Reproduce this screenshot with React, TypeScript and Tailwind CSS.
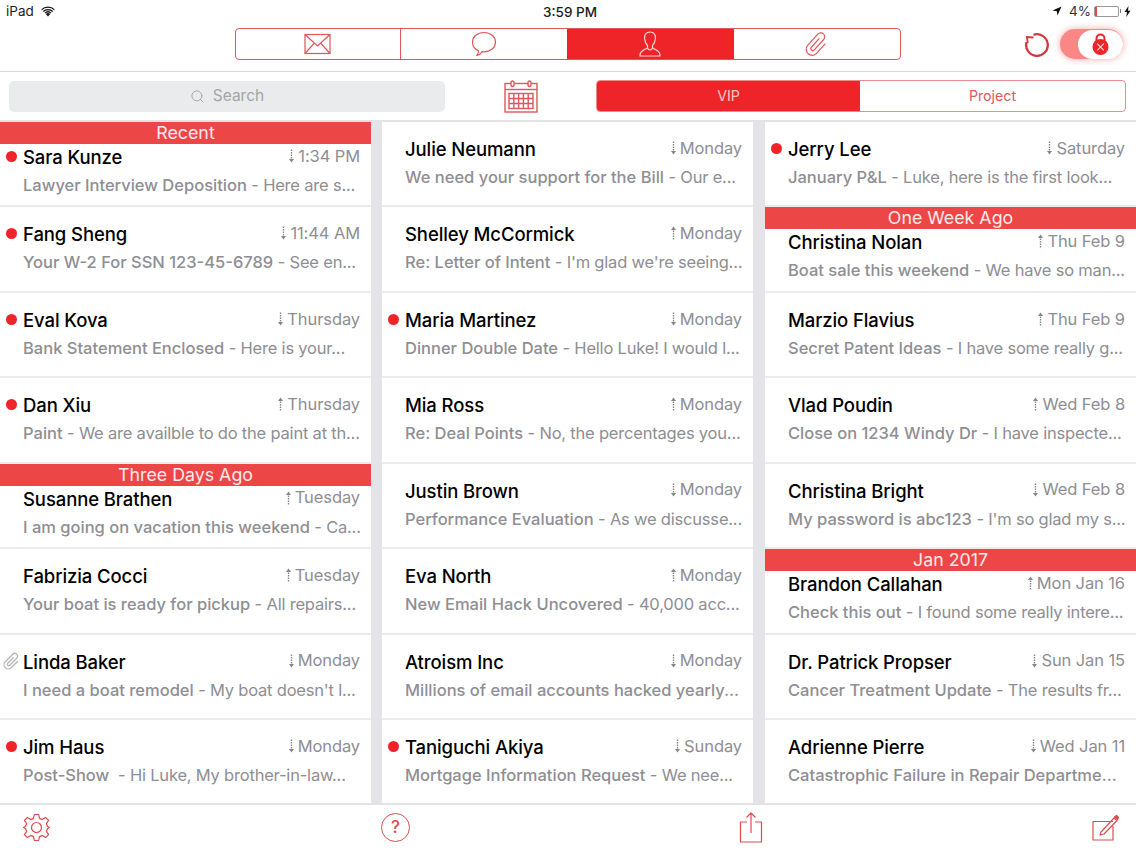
import { Search } from "lucide-react"

const FONT = "font-['Inter','Liberation_Sans',sans-serif]"

type Mail = {
  name: string
  subject: string
  preview: string
  date: string
  up?: boolean
  dot?: boolean
  clip?: boolean
  section?: string
}

const col1: Mail[] = [
  { section: "Recent", name: "Sara Kunze", subject: "Lawyer Interview Deposition", preview: "Here are s...", date: "1:34 PM", dot: true },
  { name: "Fang Sheng", subject: "Your W-2 For SSN 123-45-6789", preview: "See en...", date: "11:44 AM", dot: true },
  { name: "Eval Kova", subject: "Bank Statement Enclosed", preview: "Here is your...", date: "Thursday", dot: true },
  { name: "Dan Xiu", subject: "Paint", preview: "We are availble to do the paint at th...", date: "Thursday", up: true, dot: true },
  { section: "Three Days Ago", name: "Susanne Brathen", subject: "I am going on vacation this weekend", preview: "Ca...", date: "Tuesday", up: true },
  { name: "Fabrizia Cocci", subject: "Your boat is ready for pickup", preview: "All repairs...", date: "Tuesday", up: true },
  { name: "Linda Baker", subject: "I need a boat remodel", preview: "My boat doesn't l...", date: "Monday", clip: true },
  { name: "Jim Haus", subject: "Post-Show ", preview: "Hi Luke, My brother-in-law...", date: "Monday", dot: true },
]

const col2: Mail[] = [
  { name: "Julie Neumann", subject: "We need your support for the Bill", preview: "Our e...", date: "Monday" },
  { name: "Shelley McCormick", subject: "Re: Letter of Intent", preview: "I'm glad we're seeing...", date: "Monday", up: true },
  { name: "Maria Martinez", subject: "Dinner Double Date", preview: "Hello Luke! I would l...", date: "Monday", dot: true },
  { name: "Mia Ross", subject: "Re: Deal Points", preview: "No, the percentages you...", date: "Monday", up: true },
  { name: "Justin Brown", subject: "Performance Evaluation", preview: "As we discusse...", date: "Monday" },
  { name: "Eva North", subject: "New Email Hack Uncovered", preview: "40,000 acc...", date: "Monday", up: true },
  { name: "Atroism Inc", subject: "Millions of email accounts hacked yearly...", preview: "", date: "Monday" },
  { name: "Taniguchi Akiya", subject: "Mortgage Information Request", preview: "We nee...", date: "Sunday", dot: true },
]

const col3: Mail[] = [
  { name: "Jerry Lee", subject: "January P&L", preview: "Luke, here is the first look...", date: "Saturday", dot: true },
  { section: "One Week Ago", name: "Christina Nolan", subject: "Boat sale this weekend", preview: "We have so man...", date: "Thu Feb 9", up: true },
  { name: "Marzio Flavius", subject: "Secret Patent Ideas", preview: "I have some really g...", date: "Thu Feb 9", up: true },
  { name: "Vlad Poudin", subject: "Close on 1234 Windy Dr", preview: "I have inspecte...", date: "Wed Feb 8", up: true },
  { name: "Christina Bright", subject: "My password is abc123", preview: "I'm so glad my s...", date: "Wed Feb 8" },
  { section: "Jan 2017", name: "Brandon Callahan", subject: "Check this out", preview: "I found some really intere...", date: "Mon Jan 16", up: true },
  { name: "Dr. Patrick Propser", subject: "Cancer Treatment Update", preview: "The results fr...", date: "Sun Jan 15" },
  { name: "Adrienne Pierre", subject: "Catastrophic Failure in Repair Departme...", preview: "", date: "Wed Jan 11" },
]

const CLIP_PATH = "M10 7 V19 a2 2 0 0 0 4 0 V5 a4 4 0 0 0 -8 0 V20 a6 6 0 0 0 12 0 V7"

function PriorityArrow({ up }: { up?: boolean }) {
  return (
    <svg width="7" height="14" viewBox="0 0 7 14" className={up ? "rotate-180" : ""} fill="#85858a">
      <rect x="2.8" y="0.5" width="1.4" height="1.5" />
      <rect x="2.8" y="3" width="1.4" height="1.5" />
      <rect x="2.8" y="5.5" width="1.4" height="1.5" />
      <rect x="2.8" y="8" width="1.4" height="1.5" />
      <path d="M1 10 H6 L3.5 13.5 Z" />
    </svg>
  )
}

function MailRow({ mail }: { mail: Mail }) {
  return (
    <div className="h-[85.45px] shrink-0 flex flex-col bg-white border-b-2 border-[#ebebed]">
      {mail.section && (
        <div className="h-[22px] shrink-0 bg-[#ec4646] text-[#fdeaea] text-[17.8px] leading-[22px] text-center">
          {mail.section}
        </div>
      )}
      <div className={`flex-1 pl-[23px] pr-[11px] ${mail.section ? "pt-0" : "pt-[14px]"}`}>
        <div className="flex items-center justify-between h-[26px]">
          <div className="relative text-[18.5px] font-medium text-black leading-[26px] tracking-[-0.1px]">
            {mail.dot && <span className="absolute left-[-17px] top-[7px] w-[11px] h-[11px] rounded-full bg-[#ee2429]" />}
            {mail.clip && (
              <svg width="19" height="19" viewBox="0 0 24 27" fill="none" stroke="#b5b5b8" strokeWidth="1.8" className="absolute left-[-21px] top-[3px] rotate-45">
                <path d={CLIP_PATH} />
              </svg>
            )}
            {mail.name}
          </div>
          <div className="flex items-center gap-[3px] mt-[-2px] text-[16.5px] text-[#8e8e93] tracking-[-0.1px]">
            <PriorityArrow up={mail.up} />
            {mail.date}
          </div>
        </div>
        <div className="mt-[2px] mr-[-10px] text-[16.5px] leading-[27px] text-[#8e8e93] whitespace-nowrap">
          <span className="font-medium">{mail.subject}</span>
          {mail.preview && <span className="whitespace-pre tracking-[-0.2px]"> - {mail.preview}</span>}
        </div>
      </div>
    </div>
  )
}

function MailColumn({ mails }: { mails: Mail[] }) {
  return (
    <div className="w-[371px] flex flex-col min-h-0 overflow-hidden">
      {mails.map((m) => (
        <MailRow key={m.name} mail={m} />
      ))}
    </div>
  )
}

function TabIcon({ kind, color }: { kind: string; color: string }) {
  const p = { fill: "none", stroke: color, strokeWidth: 1.2 }
  if (kind === "mail") {
    return (
      <svg width="28" height="22" viewBox="0 0 28 22" {...p}>
        <rect x="1" y="1.5" width="25" height="19" />
        <path d="M1 1.5 L13.5 13 L26 1.5 M1 20.5 L10 10.5 M26 20.5 L17 10.5" />
      </svg>
    )
  }
  if (kind === "chat") {
    return (
      <svg width="26" height="26" viewBox="0 0 26 26" {...p}>
        <path d="M13 1.5 C19.5 1.5 24.5 5.8 24.5 11.2 C24.5 16.6 19.5 20.8 13 20.8 C12.3 20.8 11.6 20.8 11 20.7 C10 22.5 8 24 6 24.3 C7 23 7.6 21.5 7.4 19.6 C3.8 18 1.5 14.9 1.5 11.2 C1.5 5.8 6.5 1.5 13 1.5 Z" />
      </svg>
    )
  }
  if (kind === "person") {
    return (
      <svg width="24" height="26" viewBox="0 0 24 26" {...p}>
        <path d="M12 1 C8 1 6.3 3.8 6.6 7.5 C6.8 10.5 8 13 9.5 14.5 L9.5 17 C7 18.5 2.5 19.5 2 23.5 L2 25 L22 25 L22 23.5 C21.5 19.5 17 18.5 14.5 17 L14.5 14.5 C16 13 17.2 10.5 17.4 7.5 C17.7 3.8 16 1 12 1 Z" />
        <path d="M9.5 17 C10.5 19.5 13.5 19.5 14.5 17" />
      </svg>
    )
  }
  return (
    <svg width="27" height="27" viewBox="0 0 24 27" {...p} className="rotate-[42deg]">
      <path d={CLIP_PATH} />
    </svg>
  )
}

function StatusBar() {
  return (
    <div className="relative h-[24px] flex items-center justify-between pl-[6px] pr-[5px] pb-[2px] text-[13.5px] text-[#1c1c1e]">
      <div className="flex items-center gap-[7px]">
        <span>iPad</span>
        <svg width="14" height="11" viewBox="0 0 14 11" fill="#111">
          <path d="M7 10.5 L4.8 8 A3.2 3.2 0 0 1 9.2 8 Z" />
          <path d="M3.6 6.7 A5 5 0 0 1 10.4 6.7 L9.5 7.6 A3.8 3.8 0 0 0 4.5 7.6 Z" />
          <path d="M1.9 5 A7.5 7.5 0 0 1 12.1 5 L11.2 5.9 A6.2 6.2 0 0 0 2.8 5.9 Z" />
          <path d="M0.2 3.2 A10 10 0 0 1 13.8 3.2 L12.9 4.1 A8.7 8.7 0 0 0 1.1 4.1 Z" />
        </svg>
      </div>
      <div className="absolute left-[543px] top-[2px] font-medium">3:59 PM</div>
      <div className="flex items-center">
        <svg width="10" height="10" viewBox="0 0 10 10" fill="#111" className="mr-[7px]">
          <path d="M9.5 0.5 L0.5 4.5 L4.8 5.2 L5.5 9.5 Z" />
        </svg>
        <span className="mr-[3px] text-[#333]">4%</span>
        <div className="w-[25px] h-[11px] border border-[#999] rounded-[2px] flex">
          <div className="w-[2px] bg-[#ee4444]" />
        </div>
        <div className="w-[1px] h-[4px] bg-[#777] ml-[1px]" />
        <svg width="7" height="11" viewBox="0 0 7 11" fill="#111" className="ml-[3px]">
          <path d="M4.5 0 L0.5 6 H3 L2.2 11 L6.5 4.8 H4 Z" />
        </svg>
      </div>
    </div>
  )
}

function TabRow() {
  const tabs = [
    { kind: "mail", active: false },
    { kind: "chat", active: false },
    { kind: "person", active: true },
    { kind: "clip", active: false },
  ]
  return (
    <div className="relative h-[48px] border-b border-[#d9d9dc] flex justify-center">
      <div className="mt-[4px] ml-[-1px] w-[666px] h-[32px] grid grid-cols-[165px_166px_167px_1fr] border border-[#e0565b] rounded-[4px] overflow-hidden">
        {tabs.map((t, i) => (
          <div
            key={t.kind}
            className={`flex items-center justify-center ${t.active ? "bg-[#ee2429]" : ""} ${i === 0 ? "border-r border-[#e0565b]" : ""}`}
          >
            <TabIcon kind={t.kind} color={t.active ? "#fbd5d5" : "#e0565b"} />
          </div>
        ))}
      </div>
      <div className="absolute left-[1024px] top-[8px]">
        <svg width="26" height="26" viewBox="0 0 26 26" fill="none" stroke="#d4383c" strokeWidth="2.3">
          <path d="M9.5 2.8 A10.8 10.8 0 1 1 2.6 10" />
          <path d="M9.5 5.5 L2.8 5 L3.8 11" strokeWidth="1.8" />
        </svg>
      </div>
      <div className="absolute left-[1060px] top-[5px] w-[63px] h-[30px] rounded-full bg-[#fb8686] shadow-[0_0_7px_rgba(238,60,60,0.45)] flex justify-end">
        <div className="w-[45px] h-[29px] mt-[0.5px] mr-[0.5px] rounded-full bg-white flex items-center justify-center">
          <svg width="17" height="23" viewBox="0 0 17 23">
            <path d="M4.5 9 V5.5 A4 4 0 0 1 12.5 5.5 V9" fill="none" stroke="#ee2429" strokeWidth="2" />
            <circle cx="8.5" cy="14" r="8" fill="#ee2429" />
            <path d="M5.2 10.7 L11.8 17.3 M11.8 10.7 L5.2 17.3" stroke="#fbd5d5" strokeWidth="1.2" />
          </svg>
        </div>
      </div>
    </div>
  )
}

function SearchRow() {
  return (
    <div className="h-[50px] flex items-center border-b-2 border-[#e3e3e6]">
      <div className="ml-[9px] w-[436px] h-[31px] rounded-[5px] bg-[#e9ebec] flex items-center justify-center gap-[8px] text-[#a3a5a8] text-[15.5px]">
        <Search size={15} strokeWidth={1.6} />
        Search
      </div>
      <div className="ml-[59px] w-[34px] flex justify-center">
        <svg width="34" height="33" viewBox="0 0 34 33" fill="none" stroke="#e0565b" strokeWidth="1.4">
          <rect x="1" y="3.5" width="32" height="28.5" />
          <path d="M1 9.5 H33" />
          <rect x="7" y="1" width="3" height="5.5" rx="1.5" fill="white" />
          <rect x="24" y="1" width="3" height="5.5" rx="1.5" fill="white" />
          <rect x="5" y="13.5" width="24" height="15" />
          <path d="M5 18.5 H29 M5 23.5 H29 M9.8 13.5 V28.5 M14.6 13.5 V28.5 M19.4 13.5 V28.5 M24.2 13.5 V28.5" />
        </svg>
      </div>
      <div className="ml-[58px] w-[530px] h-[32px] grid grid-cols-[263px_1fr] border border-[#ee8a8c] rounded-[4px] overflow-hidden text-[14.2px]">
        <div className="bg-[#ee2429] text-[#fbc9c9] flex items-center justify-center">VIP</div>
        <div className="text-[#e0565b] flex items-center justify-center">Project</div>
      </div>
    </div>
  )
}

function BottomBar() {
  const stroke = { fill: "none", stroke: "#df4a4e", strokeWidth: 1.2, strokeLinejoin: "round" as const }
  return (
    <div className="h-[49px] shrink-0 bg-white border-t-2 border-[#e3e3e6] relative flex items-center justify-between pl-[22px] pr-[17px] pb-[2px]">
      <svg width="29" height="29" viewBox="0 0 29 29" {...stroke}>
        <circle cx="14.5" cy="14.5" r="5" />
        <path d="M12.3 1.5 H16.7 L17.5 5.4 L20.3 6.6 L23.6 4.4 L26.6 7.4 L24.4 10.7 L25.6 13.5 L27.5 14.5 L25.6 15.5 L24.4 18.3 L26.6 21.6 L23.6 24.6 L20.3 22.4 L17.5 23.6 L16.7 27.5 H12.3 L11.5 23.6 L8.7 22.4 L5.4 24.6 L2.4 21.6 L4.6 18.3 L3.4 15.5 L1.5 14.5 L3.4 13.5 L4.6 10.7 L2.4 7.4 L5.4 4.4 L8.7 6.6 L11.5 5.4 Z" />
      </svg>
      <div className="ml-[1px] w-[29px] h-[29px] rounded-full border border-[#df4a4e] flex items-center justify-center text-[#df4a4e] text-[17px] font-medium">
        ?
      </div>
      <svg width="24" height="31" viewBox="0 0 24 31" {...stroke}>
        <path d="M8 10 H1.5 V30 H22.5 V10 H16 M12 21 V1 M7.5 5.5 L12 1 L16.5 5.5" />
      </svg>
      <svg width="27" height="27" viewBox="0 0 27 27" {...stroke}>
        <path d="M21 7.5 H1 V26 H21 V12" />
        <path d="M9 18 L22 4 L25 6.5 L12 20 L8 21 Z" fill="none" />
        <path d="M22.5 3 L24.5 1.5 L26.5 3.5 L25.5 5.5 Z" fill="#df4a4e" />
      </svg>
    </div>
  )
}

export default function App() {
  return (
    <div className={`w-[1136px] h-[852px] overflow-hidden bg-white flex flex-col ${FONT}`}>
      <StatusBar />
      <TabRow />
      <SearchRow />
      <div className="flex-1 min-h-0 grid grid-cols-[371px_372px_371px] gap-x-[11px] bg-[#e4e4e8]">
        <MailColumn mails={col1} />
        <MailColumn mails={col2} />
        <MailColumn mails={col3} />
      </div>
      <BottomBar />
    </div>
  )
}
